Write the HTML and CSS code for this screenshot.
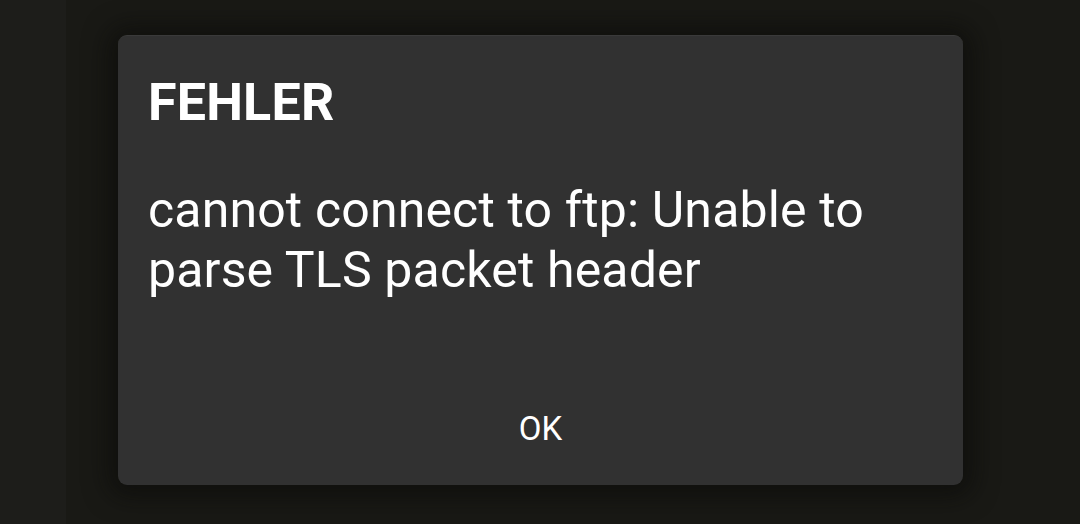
FILE: index.html
```html
<!DOCTYPE html>
<html lang="de">
<head>
    <meta charset="UTF-8">
    <meta name="viewport" content="width=device-width, initial-scale=1.0">
    <title>Fehler</title>
    <link rel="stylesheet" href="styles.css">
</head>
<body>
    <div class="screen">
        <div class="rand"></div>
        <div class="flaeche">
            <div class="dialog">
                <h1 class="titel">FEHLER</h1>
                <p class="meldung">cannot connect to ftp: Unable to parse TLS packet header</p>
                <div class="aktionen">
                    <button class="knopf">OK</button>
                </div>
            </div>
        </div>
    </div>
</body>
</html>
```

FILE: styles.css
```css
/* Grundlegende Stile */
* {
    margin: 0;
    padding: 0;
    box-sizing: border-box;
    font-family: 'Roboto', 'Liberation Sans', sans-serif;
}

body {
    width: 1080px;
    height: 524px;
    overflow: hidden;
    background: #1d1d1a;
    color: #ffffff;
}

.screen {
    display: flex;
    height: 100%;
}

/* linker Streifen */
.rand {
    width: 66px;
    background: #1d1d1a;
}

.flaeche {
    flex: 1;
    background: #191915;
    padding-top: 35px;
    padding-left: 52px;
}

/* Dialogfenster */
.dialog {
    width: 845px;
    height: 450px;
    background: #313131;
    border-radius: 9px;
    border-top: 1px solid #3a3a3a;
    box-shadow: 0 2px 24px 10px rgba(10, 10, 8, 0.55);
    padding: 37px 30px 0 30px;
    display: flex;
    flex-direction: column;
}

.titel {
    font-size: 52px;
    font-weight: 700;
    line-height: 60px;
    letter-spacing: 0.2px;
}

.meldung {
    margin-top: 47px;
    font-size: 50px;
    line-height: 60px;
    letter-spacing: 0.15px;
}

.aktionen {
    margin-top: auto;
    margin-bottom: 36px;
    display: flex;
    justify-content: center;
}

.knopf {
    background: none;
    border: none;
    color: #ffffff;
    font-size: 33px;
    line-height: 40px;
    cursor: pointer;
}
```
